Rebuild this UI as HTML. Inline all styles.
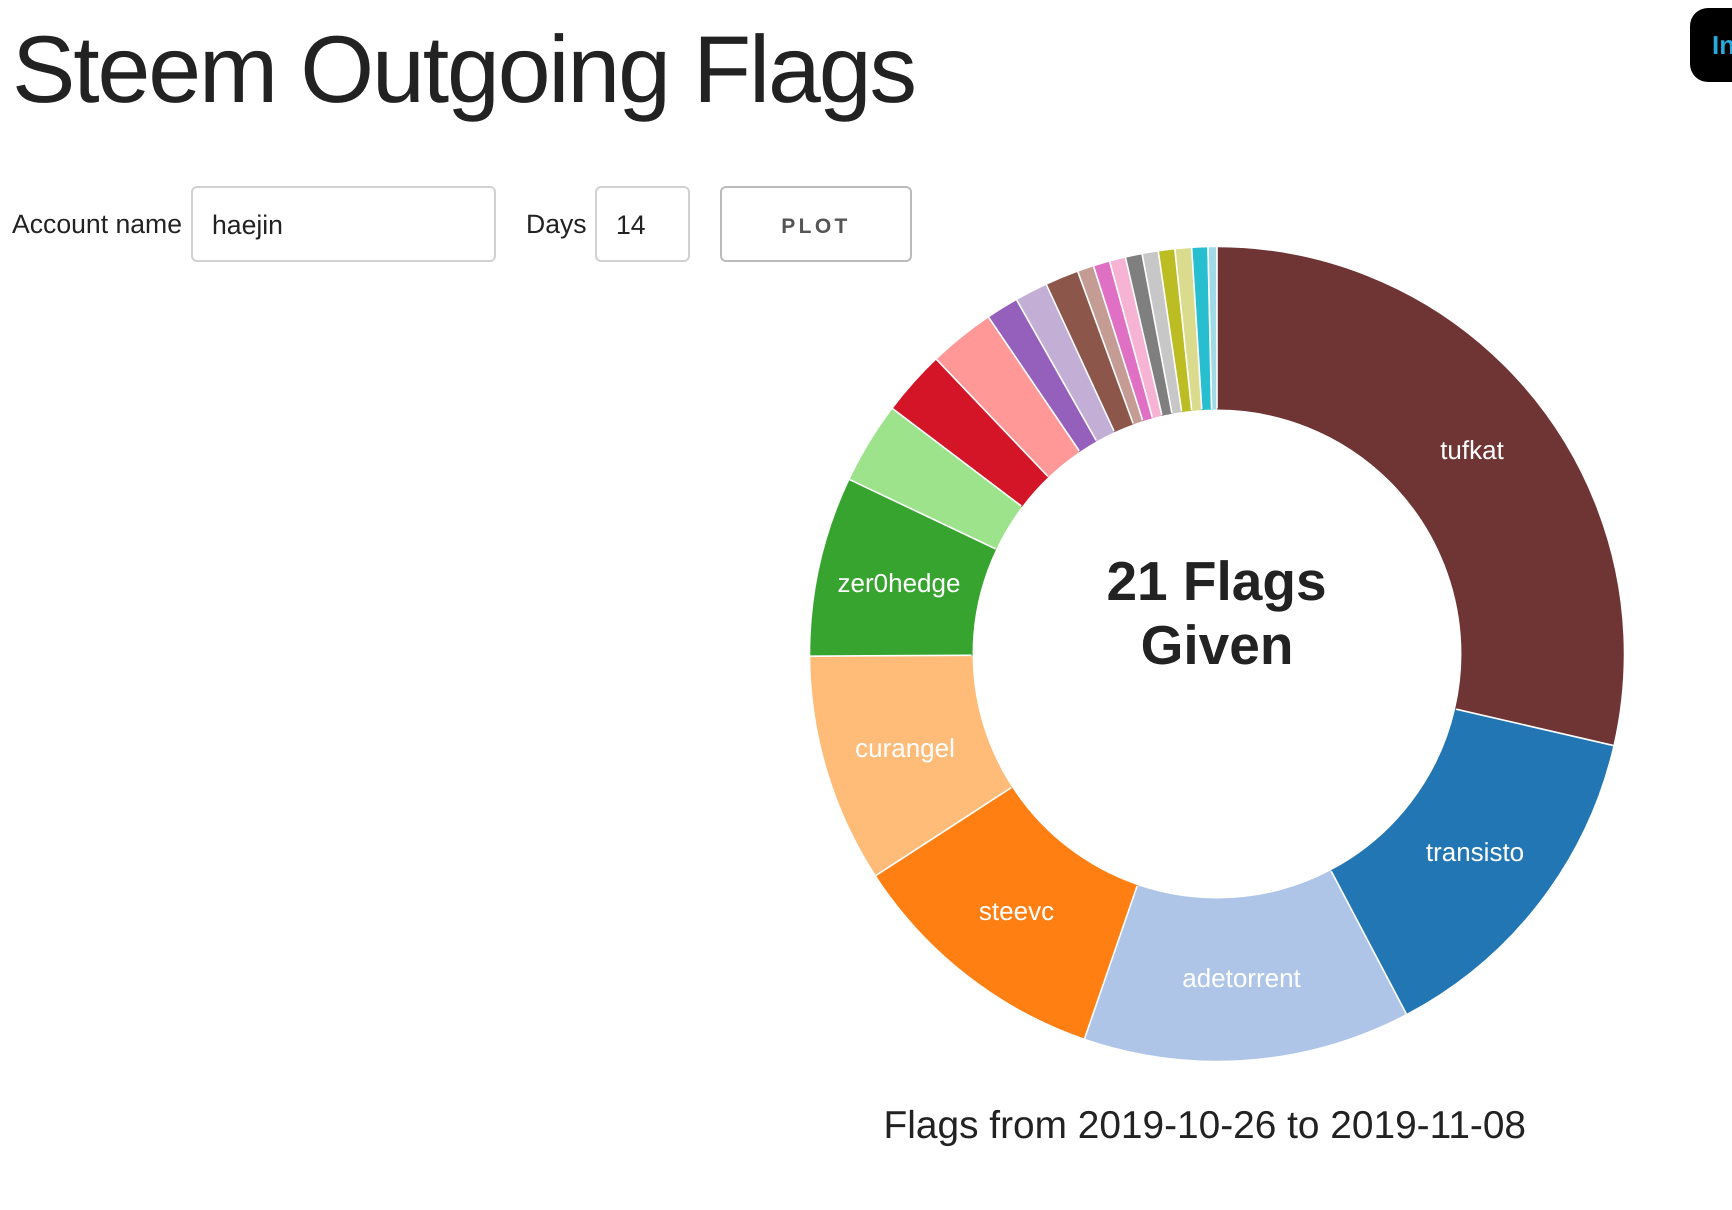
<!DOCTYPE html>
<html lang="en">
<head>
<meta charset="utf-8">
<title>Steem Outgoing Flags</title>
<style>
html,body{margin:0;padding:0;background:#fff;width:1732px;height:1210px;overflow:hidden}
body{position:relative;font-family:"Liberation Sans",Arial,sans-serif;color:#222;text-rendering:geometricPrecision}
h1{position:absolute;left:12px;top:18px;margin:0;font-size:95px;letter-spacing:-2.12px;line-height:105px;font-weight:400;white-space:nowrap;color:#222}
label{position:absolute;top:204px;font-size:26.6px;line-height:40px;white-space:nowrap;color:#222}
input{position:absolute;top:186px;height:76px;box-sizing:border-box;margin:0;padding:2px 0 0 19px;border:2px solid #d1d1d1;border-radius:6px;background:#fff;font:26.6px "Liberation Sans",Arial,sans-serif;color:#222;outline:0}
button{position:absolute;left:720px;top:186px;width:192px;height:76px;box-sizing:border-box;margin:0;padding:6px 0 0;border:2px solid #bbb;border-radius:6px;background:#fff;font:bold 21px "Liberation Sans",Arial,sans-serif;letter-spacing:3.4px;color:#555}
.pill{position:absolute;left:1690px;top:8px;width:120px;height:74px;border-radius:18px;background:#000;color:#2aa9dc;font-weight:bold;font-size:26px;line-height:74px;padding-left:22px;box-sizing:border-box;white-space:nowrap}
svg{position:absolute;left:0;top:0}
svg text{font-family:"Liberation Sans",Arial,sans-serif}
.lb{font-size:26px;fill:#fff;text-anchor:middle}
.c{font-size:55px;font-weight:bold;fill:#222;text-anchor:middle}
.s{fill:none;stroke-width:162}
.d{stroke:#fff;stroke-width:1.6}
</style>
</head>
<body>
<h1>Steem Outgoing Flags</h1>
<label style="left:12px">Account name</label>
<input type="text" value="haejin" style="left:191px;width:305px">
<label style="left:526px">Days</label>
<input type="text" value="14" style="left:595px;width:95px">
<button>PLOT</button>
<div class="pill">Install</div>
<svg width="1732" height="1210" viewBox="0 0 1732 1210">
<g transform="translate(1217 654) scale(1.0018) translate(-1217 -653)">
<g transform="rotate(-90 1217 653)">
<circle class="s" cx="1217" cy="653" r="325" pathLength="360" stroke="#6f3434" stroke-dasharray="103 360" stroke-dashoffset="0"/>
<circle class="s" cx="1217" cy="653" r="325" pathLength="360" stroke="#2376b4" stroke-dasharray="49.25 360" stroke-dashoffset="-103"/>
<circle class="s" cx="1217" cy="653" r="325" pathLength="360" stroke="#aec5e8" stroke-dasharray="46.75 360" stroke-dashoffset="-152.25"/>
<circle class="s" cx="1217" cy="653" r="325" pathLength="360" stroke="#ff7f12" stroke-dasharray="38 360" stroke-dashoffset="-199"/>
<circle class="s" cx="1217" cy="653" r="325" pathLength="360" stroke="#ffbb78" stroke-dasharray="32.7 360" stroke-dashoffset="-237"/>
<circle class="s" cx="1217" cy="653" r="325" pathLength="360" stroke="#36a42e" stroke-dasharray="25.7 360" stroke-dashoffset="-269.7"/>
<circle class="s" cx="1217" cy="653" r="325" pathLength="360" stroke="#9ce38c" stroke-dasharray="11.7 360" stroke-dashoffset="-295.4"/>
<circle class="s" cx="1217" cy="653" r="325" pathLength="360" stroke="#d41528" stroke-dasharray="9.3 360" stroke-dashoffset="-307.1"/>
<circle class="s" cx="1217" cy="653" r="325" pathLength="360" stroke="#ff9896" stroke-dasharray="9.45 360" stroke-dashoffset="-316.4"/>
<circle class="s" cx="1217" cy="653" r="325" pathLength="360" stroke="#9460bc" stroke-dasharray="4.65 360" stroke-dashoffset="-325.85"/>
<circle class="s" cx="1217" cy="653" r="325" pathLength="360" stroke="#c3aed6" stroke-dasharray="4.7 360" stroke-dashoffset="-330.5"/>
<circle class="s" cx="1217" cy="653" r="325" pathLength="360" stroke="#8c564b" stroke-dasharray="4.8 360" stroke-dashoffset="-335.2"/>
<circle class="s" cx="1217" cy="653" r="325" pathLength="360" stroke="#c49c94" stroke-dasharray="2.34 360" stroke-dashoffset="-340"/>
<circle class="s" cx="1217" cy="653" r="325" pathLength="360" stroke="#e070c4" stroke-dasharray="2.36 360" stroke-dashoffset="-342.34"/>
<circle class="s" cx="1217" cy="653" r="325" pathLength="360" stroke="#f7b3d4" stroke-dasharray="2.3 360" stroke-dashoffset="-344.7"/>
<circle class="s" cx="1217" cy="653" r="325" pathLength="360" stroke="#7f7f7f" stroke-dasharray="2.4 360" stroke-dashoffset="-347"/>
<circle class="s" cx="1217" cy="653" r="325" pathLength="360" stroke="#c7c7c7" stroke-dasharray="2.3 360" stroke-dashoffset="-349.4"/>
<circle class="s" cx="1217" cy="653" r="325" pathLength="360" stroke="#bcbd22" stroke-dasharray="2.36 360" stroke-dashoffset="-351.7"/>
<circle class="s" cx="1217" cy="653" r="325" pathLength="360" stroke="#dbdb8d" stroke-dasharray="2.37 360" stroke-dashoffset="-354.06"/>
<circle class="s" cx="1217" cy="653" r="325" pathLength="360" stroke="#27bfd0" stroke-dasharray="2.3 360" stroke-dashoffset="-356.43"/>
<circle class="s" cx="1217" cy="653" r="325" pathLength="360" stroke="#9fdae6" stroke-dasharray="1.27 360" stroke-dashoffset="-358.73"/>
</g>
<g class="d">
<line x1="1217" y1="408" x2="1217" y2="245" transform="rotate(0 1217 653)"/>
<line x1="1217" y1="408" x2="1217" y2="245" transform="rotate(103 1217 653)"/>
<line x1="1217" y1="408" x2="1217" y2="245" transform="rotate(152.25 1217 653)"/>
<line x1="1217" y1="408" x2="1217" y2="245" transform="rotate(199 1217 653)"/>
<line x1="1217" y1="408" x2="1217" y2="245" transform="rotate(237 1217 653)"/>
<line x1="1217" y1="408" x2="1217" y2="245" transform="rotate(269.7 1217 653)"/>
<line x1="1217" y1="408" x2="1217" y2="245" transform="rotate(295.4 1217 653)"/>
<line x1="1217" y1="408" x2="1217" y2="245" transform="rotate(307.1 1217 653)"/>
<line x1="1217" y1="408" x2="1217" y2="245" transform="rotate(316.4 1217 653)"/>
<line x1="1217" y1="408" x2="1217" y2="245" transform="rotate(325.85 1217 653)"/>
<line x1="1217" y1="408" x2="1217" y2="245" transform="rotate(330.5 1217 653)"/>
<line x1="1217" y1="408" x2="1217" y2="245" transform="rotate(335.2 1217 653)"/>
<line x1="1217" y1="408" x2="1217" y2="245" transform="rotate(340 1217 653)"/>
<line x1="1217" y1="408" x2="1217" y2="245" transform="rotate(342.34 1217 653)"/>
<line x1="1217" y1="408" x2="1217" y2="245" transform="rotate(344.7 1217 653)"/>
<line x1="1217" y1="408" x2="1217" y2="245" transform="rotate(347 1217 653)"/>
<line x1="1217" y1="408" x2="1217" y2="245" transform="rotate(349.4 1217 653)"/>
<line x1="1217" y1="408" x2="1217" y2="245" transform="rotate(351.7 1217 653)"/>
<line x1="1217" y1="408" x2="1217" y2="245" transform="rotate(354.06 1217 653)"/>
<line x1="1217" y1="408" x2="1217" y2="245" transform="rotate(356.43 1217 653)"/>
<line x1="1217" y1="408" x2="1217" y2="245" transform="rotate(358.73 1217 653)"/>
</g>
</g>
<text class="lb" x="1472" y="459">tufkat</text>
<text class="lb" x="1475" y="861">transisto</text>
<text class="lb" x="1241.5" y="987">adetorrent</text>
<text class="lb" x="1016.5" y="920">steevc</text>
<text class="lb" x="905" y="757">curangel</text>
<text class="lb" x="899" y="592">zer0hedge</text>
<text class="c" x="1216.5" y="600">21 Flags</text>
<text class="c" x="1217" y="664">Given</text>
<text x="1204.8" y="1138" font-size="38.85" fill="#222" text-anchor="middle">Flags from 2019-10-26 to 2019-11-08</text>
</svg>
</body>
</html>
